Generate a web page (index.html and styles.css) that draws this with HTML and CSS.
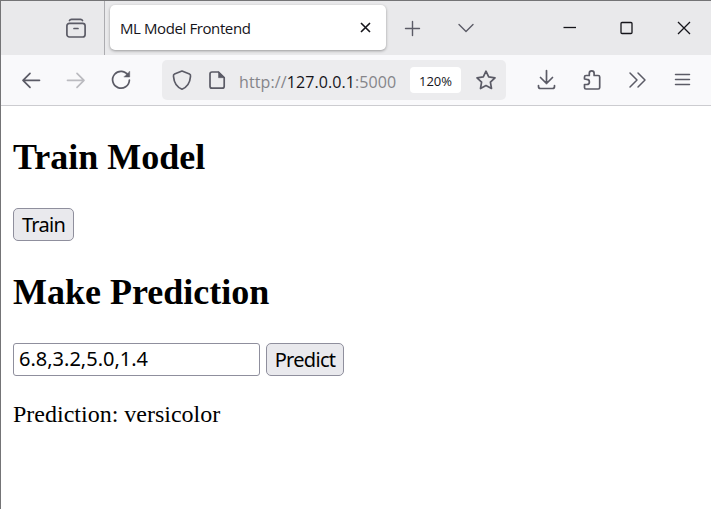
FILE: index.html
```html
<!DOCTYPE html>
<html lang="en">
<head>
<meta charset="utf-8">
<title>ML Model Frontend</title>
<link rel="stylesheet" href="styles.css">
</head>
<body>
<div class="window">
  <header class="tabs">
    <div class="view"><svg class="icon" viewBox="0 0 24 24"><path d="M5.500 4.500Q6 3.300 7.500 3.300h9Q18 3.300 18.500 4.500"/><rect x="2.900" y="7.300" width="18.200" height="13.700" rx="2.500"/><path d="M10 12.500h4"/></svg></div>
    <div class="tab"><span class="tab-title">ML Model Frontend</span><svg class="close" viewBox="0 0 24 24"><path d="M8 7l9 9m0-9l-9 9"/></svg></div>
    <svg class="icon plus" viewBox="0 0 24 24"><path d="M12.500 5.500v14M5.500 12.500h14"/></svg>
    <svg class="icon chevron" viewBox="0 0 24 24"><path d="M5 8.500l7 7 7-7"/></svg>
    <div class="controls">
      <svg viewBox="0 0 24 24"><path d="M6.500 11.500h12.500"/></svg>
      <svg viewBox="0 0 24 24"><rect x="7" y="6.500" width="11" height="11" rx="1"/></svg>
      <svg viewBox="0 0 24 24"><path d="M7 6l12 12M19 6L7 18"/></svg>
    </div>
  </header>
  <nav class="toolbar">
    <div class="group">
      <svg class="icon" viewBox="0 0 24 24"><path d="M20.500 12.300H4m7-7l-7 7 7 7"/></svg>
      <svg class="icon disabled" viewBox="0 0 24 24"><path d="M3.500 12.300H20m-7-7l7 7-7 7"/></svg>
      <svg class="icon" viewBox="0 0 24 24"><path d="M19.300 7.600A8.400 8.400 0 1 0 20.400 12"/><path class="solid" d="M20.700 3.500v5.500h-5.500z"/></svg>
    </div>
    <div class="address">
      <svg class="icon" viewBox="0 0 24 24"><path d="M12 3L19.500 6Q20.800 6.500 20.500 8.500C20 14.500 17.500 19 12 21.200C6.500 19 4 14.500 3.500 8.500Q3.200 6.500 4.500 6z"/></svg>
      <svg class="icon page" viewBox="0 0 24 24"><path d="M13.500 4H7Q5 4 5 6v12.200q0 2 2 2h10.200q2 0 2-2V9.700z"/><path class="solid" d="M13.500 4v5.700h5.700z"/></svg>
      <div class="url">http://<b>127.0.0.1</b>:5000</div>
      <span class="zoom">120%</span>
      <svg class="icon star" viewBox="0 0 24 24"><path d="M12 3.200l2.700 5.700 6.300.9-4.600 4.400 1.100 6.300L12 17.500l-5.500 3 1.100-6.300L3 9.800l6.300-.9z"/></svg>
    </div>
    <div class="group">
      <svg class="icon" viewBox="0 0 24 24"><path d="M12.500 2.500v13m-6-6l6 6 6-6M4.500 17.500V18.500q0 2 2 2h12q2 0 2-2v-1"/></svg>
      <svg class="icon" viewBox="0 0 24 24"><path d="M5.500 11V9q0-1.500 1.500-1.500h3.300V5.200a2.400 2.400 0 0 1 4.800 0v2.300h4.100q1.500 0 1.500 1.500v10.500q0 1.500-1.500 1.500H7q-1.500 0-1.500-1.500v-3h2.300a2.600 2.600 0 0 0 0-5.200z"/></svg>
      <svg class="icon thin" viewBox="0 0 24 24"><path d="M5 5l7 7-7 7m8-14l7 7-7 7"/></svg>
      <svg class="icon thin" viewBox="0 0 24 24"><path d="M5.500 6.500h14m-14 5h14m-14 5h14"/></svg>
    </div>
  </nav>
  <main>
    <h2>Train Model</h2>
    <button class="train" type="button">Train</button>
    <h2 class="second">Make Prediction</h2>
    <form>
      <input type="text" value="6.8,3.2,5.0,1.4">
      <button class="predict" type="button">Predict</button>
    </form>
    <p>Prediction: versicolor</p>
  </main>
</div>
</body>
</html>
```
FILE: styles.css
```css
* { box-sizing: border-box; }
body { margin: 0; background: #fff; }
.window { height: 509px; overflow: hidden; border-top: 1px solid #747476; border-left: 1px solid #747476; }
svg { display: block; flex: none; width: 24px; height: 24px; fill: none; stroke: #15141a; stroke-width: 1.3; }
.icon { stroke: #5b5b66; stroke-width: 1.7; stroke-linecap: round; stroke-linejoin: round; }
.icon .solid { fill: #5b5b66; stroke-width: .5; }
.disabled { stroke: #bbbbc0; }
.thin { stroke-width: 1.5; }
.tabs { display: flex; height: 54px; background: #e9e9eb; }
.view { width: 104px; padding: 15px 0 0 63px; border-right: 1px solid #acacb0; }
.tab { display: flex; align-items: center; width: 276px; height: 45px; margin: 4px 0 0 5px; padding: 0 9px 0 10px; border-radius: 5px; background: #fff; box-shadow: 0 1px 3px rgba(0, 0, 0, .35); font: 15px/24px "Open Sans", sans-serif; color: #15141a; }
.tab-title { letter-spacing: -.4px; }
.close { margin-left: auto; stroke-width: 1.6; }
.plus { margin: 15px 0 0 14px; stroke-width: 1.4; }
.chevron { margin: 15px 0 0 30px; stroke-width: 1.4; }
.controls { display: flex; gap: 33px; margin: 15px 0 0 79px; }
.toolbar { display: flex; align-items: center; height: 51px; padding-left: 18px; border-bottom: 1px solid #ccccd0; background: #f9f9fb; }
.group { display: flex; gap: 21px; }
.group:last-child { gap: 21.3px; }
.address { display: flex; align-items: center; width: 344px; height: 40px; margin: 0 28px 0 29px; padding-left: 8px; border-radius: 5px; background: #ececee; }
.page { margin-left: 11px; }
.url { width: 171px; margin-left: 10px; padding-top: 3px; font: 16px/24px "Open Sans", sans-serif; letter-spacing: .1px; white-space: nowrap; color: #85858a; }
.url b { font-weight: 400; color: #15141a; }
.zoom { width: 51px; height: 26px; border-radius: 4px; background: #fff; font: 13px/28px "Open Sans", sans-serif; text-align: center; color: #15141a; }
.star { margin-left: 13px; }
main { padding: 30px 0 0 12px; font: 24px/28px "Liberation Serif", serif; color: #000; }
h2 { margin: 0; font-size: 36px; line-height: 42px; }
.second { margin-top: 30px; }
button, input { display: block; height: 33px; margin: 0; border: 1px solid #8f8f9d; font: 20px/29px "Noto Sans", sans-serif; color: #000; }
button { padding: 0; border-radius: 5px; background: #e9e9ed; text-align: center; letter-spacing: -.7px; }
.train { width: 61px; margin-top: 30px; }
form { display: flex; gap: 6px; margin-top: 30px; }
input { width: 247px; padding: 0 5px 2px; border-radius: 3px; background: #fff; }
.predict { width: 78px; }
p { margin: 24px 0 0; }
```
